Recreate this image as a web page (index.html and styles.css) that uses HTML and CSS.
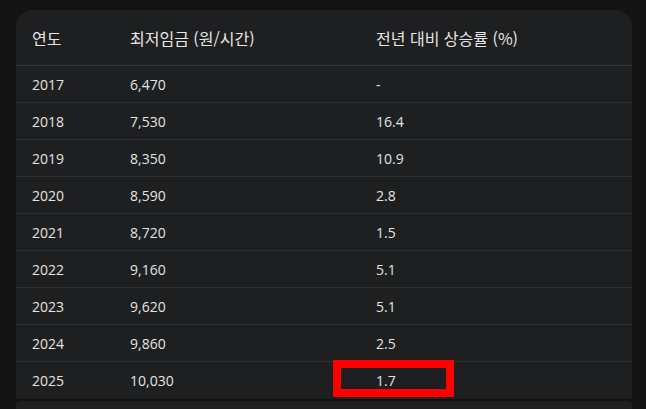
FILE: index.html
```html
<!DOCTYPE html>
<html lang="ko">
<head>
<meta charset="utf-8">
<link rel="stylesheet" href="styles.css">
</head>
<body>
<div class="card">
  <table class="wage">
    <thead>
      <tr><th class="c1">연도</th><th class="c2">최저임금 (원/시간)</th><th class="c3">전년 대비 상승률 (%)</th></tr>
    </thead>
    <tbody>
      <tr><td>2017</td><td>6,470</td><td>-</td></tr>
      <tr><td>2018</td><td>7,530</td><td>16.4</td></tr>
      <tr><td>2019</td><td>8,350</td><td>10.9</td></tr>
      <tr><td>2020</td><td>8,590</td><td>2.8</td></tr>
      <tr><td>2021</td><td>8,720</td><td>1.5</td></tr>
      <tr><td>2022</td><td>9,160</td><td>5.1</td></tr>
      <tr><td>2023</td><td>9,620</td><td>5.1</td></tr>
      <tr><td>2024</td><td>9,860</td><td>2.5</td></tr>
      <tr><td>2025</td><td>10,030</td><td><span class="mark">1.7</span></td></tr>
    </tbody>
  </table>
</div>
<div class="card next"></div>
</body>
</html>
```
FILE: styles.css
```css
html, body { margin: 0; padding: 0; }
body {
  background: #131314;
  font-family: "Open Sans", "Noto Sans", "Noto Sans CJK KR", sans-serif;
  color: #e3e3e3;
  padding: 10px 14px 0 16px;
  height: 409px;
  box-sizing: border-box;
  overflow: hidden;
}
.card {
  background: #1e1f20;
  border-radius: 16px 16px 0 0;
  width: 616px;
}
.card.next {
  margin-top: 2px;
  height: 20px;
  border-radius: 4px 4px 0 0;
}
.wage {
  border-collapse: collapse;
  width: 100%;
  table-layout: fixed;
}
.wage th, .wage td {
  text-align: left;
  padding: 0 0 0 16px;
  white-space: nowrap;
}
.c1 { width: 82px; }
.c2 { width: 230px; }
.wage th {
  height: 55px;
  font-family: "Noto Sans CJK KR", "Noto Sans", sans-serif;
  font-size: 16px;
  font-weight: 400;
  color: #e6e6e6;
  border-bottom: 1px solid #333537;
}
.wage td {
  height: 36px;
  font-size: 14px;
  color: #e3e3e3;
  border-bottom: 1px solid #2d2f31;
}
.wage tbody tr:last-child td { border-bottom: none; height: 37px; }
.mark { position: relative; }
.mark::after {
  content: "";
  position: absolute;
  left: -43px;
  top: -11px;
  width: 105px;
  height: 21px;
  border: 8px solid #ff0000;
}
```
